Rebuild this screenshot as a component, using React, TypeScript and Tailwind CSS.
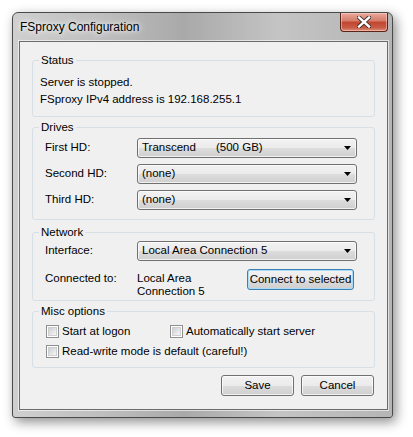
import type { ReactNode } from 'react'

const font = { fontFamily: '"Liberation Sans", Arial, sans-serif' }

function Group({ title, className, children }: { title: string; className?: string; children: ReactNode }) {
  return (
    <fieldset className={`mx-[12px] rounded-[3px] border border-[#d5dfe5] px-[5px] ${className ?? ''}`}>
      <legend className="ml-[1px] px-[2px] leading-[14px]">{title}</legend>
      {children}
    </fieldset>
  )
}

function Combo({ children }: { children: ReactNode }) {
  return (
    <div className="flex h-[20px] w-[220px] items-center rounded-[3px] border border-[#707070] bg-[linear-gradient(#f2f2f2,#ebebeb_50%,#dddddd_50%,#cfcfcf)] pl-[4px] pr-[4px] shadow-[inset_0_0_0_1px_rgba(255,255,255,0.7)]">
      <div className="flex flex-1 items-center">{children}</div>
      <svg width="7" height="4" viewBox="0 0 7 4" className="mr-[1px]">
        <path d="M0 0h7L3.5 4z" fill="#000" />
      </svg>
    </div>
  )
}

function Button({ label, focused, className }: { label: string; focused?: boolean; className?: string }) {
  return (
    <button
      type="button"
      className={`flex h-[21px] items-center justify-center rounded-[3px] border bg-[linear-gradient(#f2f2f2,#ebebeb_50%,#dddddd_50%,#cfcfcf)] ${
        focused
          ? 'border-[#3c7fb1] shadow-[inset_0_0_0_1px_#a8dcf7]'
          : 'border-[#707070] shadow-[inset_0_0_0_1px_rgba(255,255,255,0.7)]'
      } ${className ?? ''}`}
    >
      {label}
    </button>
  )
}

function Check({ label }: { label: string }) {
  return (
    <div className="flex items-center">
      <span className="flex h-[13px] w-[13px] items-center justify-center border border-[#8e8f8f] bg-white">
        <span className="h-[9px] w-[9px] border border-[#cfcfcf] bg-[linear-gradient(135deg,#cbcfd5,#f6f6f6)]" />
      </span>
      <span className="ml-[3px]">{label}</span>
    </div>
  )
}

export default function App() {
  return (
    <div className="h-[437px] w-[413px] bg-white pl-[12px] pt-[12px]" style={font}>
      <div className="flex h-[406px] w-[381px] flex-col rounded-t-[6px] rounded-b-[3px] border border-[#4a4a4a] bg-[linear-gradient(90deg,#cfcfcf,#bdbdbd_25%,#a9a9a9_45%,#c4c4c4_70%,#b5b5b5)] shadow-[3px_4px_12px_rgba(0,0,0,0.45)]">
        <div className="flex h-[28px] items-start">
          <span className="mt-[7px] pl-[7px] text-[12px] leading-[15px] text-black [text-shadow:0_0_8px_#fff,0_0_4px_#fff]">
            FSproxy Configuration
          </span>
          <div className="ml-auto mr-[4px] flex h-[19px] w-[48px] items-center justify-center rounded-b-[4px] border border-t-0 border-[#5b2419] bg-[linear-gradient(#e9a99b,#d37b69_45%,#c2452f_50%,#c75a44_80%,#e08d78)] shadow-[inset_0_0_0_1px_rgba(255,220,210,0.5)]">
            <svg width="14" height="12" viewBox="0 0 14 12">
              <path d="M2 1.5l10 9M12 1.5l-10 9" stroke="#3a2a28" strokeWidth="4.2" strokeLinecap="square" />
              <path d="M2 1.5l10 9M12 1.5l-10 9" stroke="#fff" strokeWidth="2.4" strokeLinecap="square" />
            </svg>
          </div>
        </div>
        <div className="mb-[7px] ml-[6px] mr-[4px] flex flex-1 flex-col border border-[#6b6b6b] bg-[#f0f0f0] pt-[11px] text-[11.5px] text-black shadow-[0_0_0_1px_rgba(255,255,255,0.6)]">
          <Group title="Status" className="pb-[8px]">
            <div className="mt-[7px] pl-[2px] leading-[17px]">
              <div>Server is stopped.</div>
              <div>FSproxy IPv4 address is 192.168.255.1</div>
            </div>
          </Group>

          <Group title="Drives" className="mt-[3px] pb-[9px]">
            <div className="mt-[4px] grid grid-cols-[92px_220px] gap-y-[6px] pl-[7px]">
              <span className="self-center">First HD:</span>
              <Combo>
                <span className="w-[74px]">Transcend</span>
                <span>(500 GB)</span>
              </Combo>
              <span className="self-center">Second HD:</span>
              <Combo>(none)</Combo>
              <span className="self-center">Third HD:</span>
              <Combo>(none)</Combo>
            </div>
          </Group>

          <Group title="Network" className="mt-[5px] pb-[2px]">
            <div className="mt-[2px] grid grid-cols-[92px_220px] gap-y-[8px] pl-[7px]">
              <span className="self-center">Interface:</span>
              <Combo>Local Area Connection 5</Combo>
              <span className="self-start pt-[3px] leading-[13px]">Connected to:</span>
              <div className="flex items-start">
                <span className="w-[90px] pt-[3px] leading-[13px]">
                  Local Area
                  <br />
                  Connection 5
                </span>
                <Button label="Connect to selected" focused className="ml-[20px] w-[107px]" />
              </div>
            </div>
          </Group>

          <Group title="Misc options" className="mt-[3px] pb-[9px]">
            <div className="mt-[6px] flex flex-col gap-y-[6px] pl-[8px] leading-[14px]">
              <div className="flex">
                <div className="w-[124px]">
                  <Check label="Start at logon" />
                </div>
                <Check label="Automatically start server" />
              </div>
              <Check label="Read-write mode is default (careful!)" />
            </div>
          </Group>

          <div className="mr-[13px] mt-[7px] flex justify-end gap-x-[7px]">
            <Button label="Save" className="w-[73px]" />
            <Button label="Cancel" className="w-[73px]" />
          </div>
        </div>
      </div>
    </div>
  )
}
